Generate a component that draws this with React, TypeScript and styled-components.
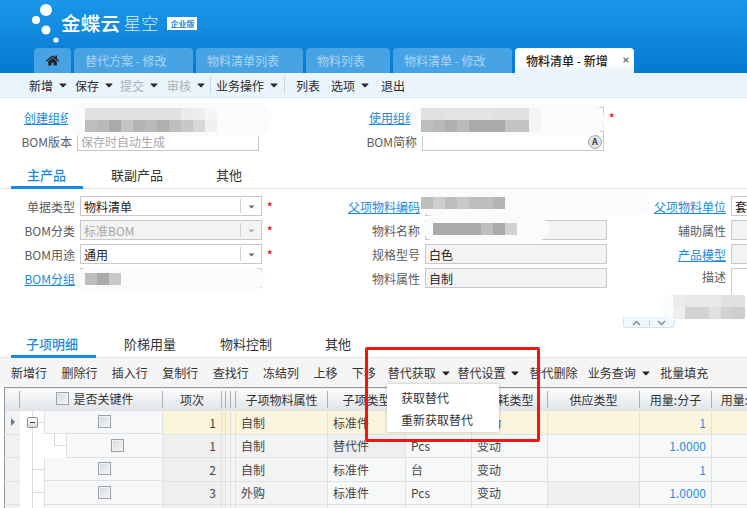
import React from "react";
import styled, { createGlobalStyle } from "styled-components";
import { FaCaretDown, FaHome, FaTimes } from "react-icons/fa";

const GlobalStyle = createGlobalStyle`
  html, body {
    margin: 0;
    padding: 0;
    background: #fff;
    overflow: hidden;
  }
  * {
    box-sizing: border-box;
  }
  body {
    font-family: "Noto Sans CJK SC", "Liberation Sans", sans-serif;
    font-size: 12px;
    color: #333;
  }
`;

const Page = styled.div`
  position: relative;
  width: 747px;
  height: 508px;
  overflow: hidden;
`;

const Header = styled.header`
  height: 73px;
  padding: 0 0 0 34px;
  display: flex;
  flex-direction: column;
  justify-content: flex-end;
  background: linear-gradient(#1b96ea, #0479d0);
`;

const Brand = styled.div`
  position: absolute;
  left: 30px;
  top: 3px;
  height: 42px;
  display: flex;
  align-items: center;
  color: #fff;
`;

const BrandName = styled.span`
  font-size: 19.5px;
  line-height: 24px;
  font-weight: 500;
  letter-spacing: 0.3px;
  margin-top: -2px;
`;

const BrandSub = styled.span`
  margin-left: 3px;
  font-size: 17.5px;
  line-height: 24px;
  font-weight: 300;
  margin-top: -2px;
  color: #d4ecfb;
`;

const Edition = styled.span`
  margin: -2px 0 0 9px;
  width: 30px;
  height: 13px;
  background: #fff;
  color: #1c8ddd;
  font-size: 8px;
  line-height: 13px;
  text-align: center;
  font-weight: 700;
  white-space: nowrap;
`;

const Tabs = styled.nav`
  display: flex;
  gap: 3px;
  height: 25px;
`;

const Tab = styled.div<{ $width: number; $active?: boolean }>`
  width: ${(p) => p.$width}px;
  display: flex;
  align-items: center;
  gap: 14px;
  padding: 0 0 1px 11px;
  border-radius: 4px 4px 0 0;
  background: ${(p) =>
    p.$active ? "linear-gradient(#fff 55%, #e9f3fa)" : "#48a3e4"};
  color: ${(p) => (p.$active ? "#222" : "#a8d5f5")};
  font-weight: ${(p) => (p.$active ? 500 : 400)};
  white-space: nowrap;
`;

const HomeTab = styled(Tab)`
  justify-content: center;
  padding-left: 0;
`;

const TopBar = styled.div`
  height: 25px;
  padding-left: 29px;
  display: flex;
  align-items: center;
  background: #e9f4fc;
  border-bottom: 1px solid #dce9f4;
`;

const TopItem = styled.span<{ $disabled?: boolean; $gap: number }>`
  display: flex;
  align-items: center;
  margin-right: ${(p) => p.$gap}px;
  color: ${(p) => (p.$disabled ? "#aab0b5" : "#2a2a2a")};
  white-space: nowrap;

  svg {
    margin-left: 4px;
    color: #2a2a2a;
  }
`;

const TopDivider = styled.i<{ $after: number }>`
  width: 1px;
  height: 18px;
  margin-right: ${(p) => p.$after}px;
  background: #cfd8df;
`;

const TopForm = styled.section`
  padding-top: 9px;
  display: grid;
  grid-template-columns: 290px 330px;
  row-gap: 4px;
`;

const TopField = styled.div<{ $label: number }>`
  display: grid;
  grid-template-columns: ${(p) => p.$label}px 182px 12px;
  column-gap: 5px;
  align-items: center;
  height: 20px;
`;

const Label = styled.label`
  text-align: right;
  color: #5c5c5c;
  white-space: nowrap;
`;

const LinkLabel = styled.a`
  justify-self: end;
  color: #1a8ae0;
  text-decoration: underline;
  white-space: nowrap;
`;

const Input = styled.div<{ $readonly?: boolean; $muted?: boolean }>`
  position: relative;
  height: 20px;
  padding: 0 3px;
  display: flex;
  align-items: center;
  border: 1px solid #c8c8c8;
  background: ${(p) => (p.$readonly ? "#f3f3f3" : "#fff")};
  color: ${(p) => (p.$muted ? "#a8a8a8" : "#222")};
  white-space: nowrap;
  overflow: hidden;
`;

const SelectArrow = styled.span<{ $muted?: boolean }>`
  position: absolute;
  right: 0;
  top: 2px;
  bottom: 2px;
  width: 21px;
  border-left: 1px solid #cfcfcf;
  display: flex;
  align-items: center;
  justify-content: center;
  color: ${(p) => (p.$muted ? "#aaa" : "#666")};
`;

const LangBadge = styled.span`
  position: absolute;
  right: 1px;
  top: 3px;
  width: 14px;
  height: 14px;
  border-radius: 50%;
  background: #dfe4e8;
  border: 1px solid #9aa3aa;
  color: #444;
  font-size: 9px;
  font-weight: 700;
  line-height: 12px;
  text-align: center;
`;

const Required = styled.span`
  color: #e8232a;
  font-weight: 700;
  font-size: 11px;
  line-height: 12px;
`;

const SectionTabs = styled.div<{ $top: number }>`
  margin-top: ${(p) => p.$top}px;
  height: 24px;
  padding-left: 11px;
  display: flex;
  border-bottom: 1px solid #e4e4e4;
`;

const SectionTab = styled.div<{ $width: number; $pad: number; $active?: boolean }>`
  width: ${(p) => p.$width}px;
  padding-left: ${(p) => p.$pad}px;
  height: 24px;
  font-size: 13px;
  line-height: 20px;
  white-space: nowrap;
  color: ${(p) => (p.$active ? "#1a8ae0" : "#333")};
  font-weight: ${(p) => (p.$active ? 500 : 400)};
  border-bottom: ${(p) => (p.$active ? "3px solid #1a8ae0" : "none")};
`;

const MainForm = styled.section`
  position: relative;
  padding-top: 7px;
  display: grid;
  grid-template-columns: 280px 327px 140px;
  grid-auto-rows: 20px;
  row-gap: 4px;
`;

const LeftField = styled.div`
  display: grid;
  grid-template-columns: 75px 182px 12px;
  column-gap: 5px;
  align-items: center;
`;

const MiddleField = styled.div`
  display: grid;
  grid-template-columns: 140px 182px;
  column-gap: 5px;
  align-items: center;
`;

const RightField = styled.div<{ $tall?: boolean }>`
  display: grid;
  grid-template-columns: 119px 40px;
  column-gap: 5px;
  align-items: ${(p) => (p.$tall ? "start" : "center")};
`;

const DescBox = styled.div`
  height: 42px;
  border: 1px solid #c8c8c8;
  background: #fff;
`;

const Stepper = styled.div`
  margin: 29px 0 0 623px;
  width: 52px;
  height: 11px;
  display: flex;
  align-items: center;
  border: 1px solid #cfe3f3;
  border-top-color: #e6f1f9;
  border-radius: 0 0 3px 3px;
  background: #f1f8fd;
`;

const StepperPart = styled.span`
  flex: 1;
  display: flex;
  justify-content: center;

  & + & {
    border-left: 1px solid #c5ccd2;
  }
`;

const RowBar = styled.div`
  height: 29px;
  padding-left: 11px;
  display: flex;
  align-items: center;
  background: #f5f5f5;
`;

const RowAction = styled.span<{ $gap?: number }>`
  display: flex;
  align-items: center;
  margin-right: ${(p) => p.$gap ?? 14.4}px;
  white-space: nowrap;

  svg {
    margin-left: 4px;
    color: #222;
  }
`;

const GridTable = styled.table`
  table-layout: fixed;
  width: 777px;
  margin-left: 4px;
  border-collapse: collapse;
  border-top: 1px solid #8f969c;
  border-left: 1px solid #8f969c;
`;

const HeadCell = styled.th`
  position: relative;
  height: 23px;
  padding: 0;
  background: linear-gradient(#fbfcfc, #dfe2e6);
  font-weight: 400;
  color: #333;
  text-align: center;
  white-space: nowrap;
  overflow: hidden;

  &::after {
    content: "";
    position: absolute;
    right: 0;
    top: 3px;
    bottom: 3px;
    width: 1px;
    background: #a9afb5;
  }
`;

const HeadInner = styled.span`
  display: inline-flex;
  align-items: center;
  gap: 4px;
  margin-left: 8px;
`;

const Cell = styled.td<{ $tone?: string; $align?: string; $link?: boolean }>`
  height: 23.5px;
  padding: 0 5px;
  background: ${(p) => p.$tone ?? "#f7f8f8"};
  border-right: 1px solid #dfe2e5;
  border-bottom: 1px solid #dfe2e5;
  text-align: ${(p) => p.$align ?? "left"};
  color: ${(p) => (p.$link ? "#2a8ce2" : "#444")};
  white-space: nowrap;
  overflow: hidden;
`;

const ThinCell = styled(Cell)`
  padding: 0;
`;

const RowMark = styled.td`
  padding: 0;
  background: #f1f2f3;
  border-bottom: 1px solid #dfe2e5;
`;

const RowPointer = styled.i`
  display: block;
  margin-left: 6px;
  width: 0;
  height: 0;
  border-left: 4px solid #6c7396;
  border-top: 4px solid transparent;
  border-bottom: 4px solid transparent;
`;

const KeyCell = styled.td`
  padding: 0;
  height: 23.5px;
  border-right: 1px solid #dfe2e5;
`;

const KeyInner = styled.div<{ $indent: number }>`
  position: relative;
  height: 100%;
  min-height: 23px;
  padding-left: ${(p) => p.$indent}px;
  background: #fff;
`;

const KeyBody = styled.div<{ $shift?: number }>`
  height: 100%;
  min-height: 23px;
  padding-left: ${(p) => p.$shift ?? 0}px;
  display: flex;
  align-items: center;
  justify-content: center;
  background: #f7f8f9;
  border-left: 1px solid #dfe2e5;
  border-bottom: 1px solid #dfe2e5;
`;

const TreeStem = styled.i`
  position: absolute;
  left: 12px;
  top: 0;
  bottom: -1px;
  width: 1px;
  background: #d7dbdf;
`;

const TreeBranch = styled.i`
  position: absolute;
  left: 12px;
  top: 11px;
  width: 12px;
  height: 1px;
  background: #d7dbdf;
`;

const TreeHook = styled.i`
  position: absolute;
  left: 34px;
  top: 0;
  width: 12px;
  height: 12px;
  border-left: 1px solid #d7dbdf;
  border-bottom: 1px solid #d7dbdf;
`;

const TreeToggle = styled.span`
  position: absolute;
  left: 7px;
  top: 6px;
  width: 11px;
  height: 11px;
  border: 1px solid #8b9298;
  border-radius: 2px;
  background: linear-gradient(#fff, #d6dade);
  z-index: 1;

  &::after {
    content: "";
    position: absolute;
    left: 2px;
    top: 4px;
    width: 5px;
    height: 1px;
    background: #444;
  }
`;

const Check = styled.span`
  display: inline-block;
  width: 13px;
  height: 13px;
  border: 1px solid #9aa0a5;
  background: linear-gradient(135deg, #d5d8db, #f7f7f7);
  box-shadow: inset 0 0 0 1px #f2f2f2;
`;

const DropMenu = styled.div`
  position: absolute;
  left: 387px;
  top: 384px;
  width: 112px;
  height: 48px;
  padding: 3px 0 0 14px;
  background: #fff;
  box-shadow: 0 0 3px rgba(0, 0, 0, 0.25);
  z-index: 3;
`;

const MenuItem = styled.div`
  height: 22px;
  line-height: 22px;
  white-space: nowrap;
`;

const Highlight = styled.div`
  position: absolute;
  left: 365px;
  top: 347px;
  width: 175px;
  height: 95px;
  border: 3px solid #f5140f;
  border-radius: 2px;
  z-index: 4;
`;

const Smear = styled.div<{
  $left: number;
  $top: number;
  $w: number;
  $h: number;
  $rows: number;
  $pad: number;
}>`
  position: absolute;
  left: ${(p) => p.$left}px;
  top: ${(p) => p.$top}px;
  width: ${(p) => p.$w}px;
  height: ${(p) => p.$h}px;
  display: grid;
  grid-auto-flow: column;
  grid-auto-columns: 12px;
  grid-template-rows: repeat(${(p) => p.$rows}, 12px);
  align-content: center;
  padding-left: ${(p) => p.$pad}px;
  border-radius: 14px;
  background: rgba(250, 251, 252, 0.97);
  z-index: 2;
  overflow: hidden;
`;

const Pixel = styled.i<{ $tone: number }>`
  background: rgb(${(p) => p.$tone}, ${(p) => p.$tone}, ${(p) => p.$tone});
`;

function Mosaic({
  left,
  top,
  w,
  h,
  rows = 1,
  pad = 10,
  tones,
}: {
  left: number;
  top: number;
  w: number;
  h: number;
  rows?: number;
  pad?: number;
  tones: number[];
}) {
  return (
    <Smear $left={left} $top={top} $w={w} $h={h} $rows={rows} $pad={pad}>
      {tones.map((t, i) => (
        <Pixel key={i} $tone={t} />
      ))}
    </Smear>
  );
}

function Caret() {
  return <FaCaretDown size={12} />;
}

function Logo() {
  return (
    <svg width="31" height="42" viewBox="0 0 31 42">
      <circle cx="16" cy="7" r="6" fill="#fff" />
      <circle cx="6" cy="17" r="4" fill="#fff" />
      <circle cx="16" cy="27" r="4.5" fill="#fff" />
      <circle cx="26" cy="37" r="2.6" fill="#fff" />
    </svg>
  );
}

function Select({ value, readonly }: { value: string; readonly?: boolean }) {
  return (
    <Input $readonly={readonly} $muted={readonly}>
      {value}
      <SelectArrow $muted={readonly}>
        <FaCaretDown size={9} />
      </SelectArrow>
    </Input>
  );
}

const rows = [
  { level: 0, seq: "1", attr: "自制", kind: "标准件", unit: "", loss: "变动", qty: "1", current: true },
  { level: 1, seq: "1", attr: "自制", kind: "替代件", unit: "Pcs", loss: "变动", qty: "1.0000" },
  { level: 0, seq: "2", attr: "自制", kind: "标准件", unit: "台", loss: "变动", qty: "1" },
  { level: 0, seq: "3", attr: "外购", kind: "标准件", unit: "Pcs", loss: "变动", qty: "1.0000" },
  { level: 0, seq: "", attr: "", kind: "", unit: "", loss: "", qty: "" },
];

export default function App() {
  return (
    <Page>
      <GlobalStyle />
      <Header>
        <Brand>
          <Logo />
          <BrandName>金蝶云</BrandName>
          <BrandSub>星空</BrandSub>
          <Edition>企业版</Edition>
        </Brand>
        <Tabs>
          <HomeTab $width={37}>
            <FaHome size={13} color="#222" />
          </HomeTab>
          <Tab $width={119}>替代方案 - 修改</Tab>
          <Tab $width={107}>物料清单列表</Tab>
          <Tab $width={84}>物料列表</Tab>
          <Tab $width={119}>物料清单 - 修改</Tab>
          <Tab $width={119} $active>
            物料清单 - 新增
            <FaTimes size={8} color="#777" />
          </Tab>
        </Tabs>
      </Header>

      <TopBar>
        <TopItem $gap={6}>
          新增
          <Caret />
        </TopItem>
        <TopItem $gap={5}>
          保存
          <Caret />
        </TopItem>
        <TopItem $disabled $gap={7}>
          提交
          <Caret />
        </TopItem>
        <TopItem $disabled $gap={3}>
          审核
          <Caret />
        </TopItem>
        <TopDivider $after={5} />
        <TopItem $gap={4}>
          业务操作
          <Caret />
        </TopItem>
        <TopDivider $after={11} />
        <TopItem $gap={11}>列表</TopItem>
        <TopItem $gap={10}>
          选项
          <Caret />
        </TopItem>
        <TopItem $gap={0}>退出</TopItem>
      </TopBar>

      <TopForm>
        <TopField $label={72}>
          <LinkLabel>创建组织</LinkLabel>
          <Input />
        </TopField>
        <TopField $label={127}>
          <LinkLabel>使用组织</LinkLabel>
          <Input />
          <Required>*</Required>
        </TopField>
        <TopField $label={72}>
          <Label>BOM版本</Label>
          <Input $muted>保存时自动生成</Input>
        </TopField>
        <TopField $label={127}>
          <Label>BOM简称</Label>
          <Input>
            <LangBadge>A</LangBadge>
          </Input>
        </TopField>
      </TopForm>

      <SectionTabs $top={14}>
        <SectionTab $width={72} $pad={16} $active>
          主产品
        </SectionTab>
        <SectionTab $width={133} $pad={28}>
          联副产品
        </SectionTab>
        <SectionTab $width={60} $pad={0}>
          其他
        </SectionTab>
      </SectionTabs>

      <MainForm>
        <LeftField>
          <Label>单据类型</Label>
          <Select value="物料清单" />
          <Required>*</Required>
        </LeftField>
        <MiddleField>
          <LinkLabel>父项物料编码</LinkLabel>
          <Input />
        </MiddleField>
        <RightField>
          <LinkLabel>父项物料单位</LinkLabel>
          <Input>套</Input>
        </RightField>

        <LeftField>
          <Label>BOM分类</Label>
          <Select value="标准BOM" readonly />
          <Required>*</Required>
        </LeftField>
        <MiddleField>
          <Label>物料名称</Label>
          <Input $readonly />
        </MiddleField>
        <RightField>
          <Label>辅助属性</Label>
          <Input $readonly />
        </RightField>

        <LeftField>
          <Label>BOM用途</Label>
          <Select value="通用" />
          <Required>*</Required>
        </LeftField>
        <MiddleField>
          <Label>规格型号</Label>
          <Input $readonly>白色</Input>
        </MiddleField>
        <RightField>
          <LinkLabel>产品模型</LinkLabel>
          <Input $readonly />
        </RightField>

        <LeftField>
          <LinkLabel>BOM分组</LinkLabel>
          <Input />
        </LeftField>
        <MiddleField>
          <Label>物料属性</Label>
          <Input $readonly>自制</Input>
        </MiddleField>
        <RightField $tall>
          <Label>描述</Label>
          <DescBox />
        </RightField>
      </MainForm>

      <Stepper>
        <StepperPart>
          <svg width="9" height="6" viewBox="0 0 9 6">
            <path d="M1 5l3.5-3.5L8 5" fill="none" stroke="#7d8790" strokeWidth="1.4" />
          </svg>
        </StepperPart>
        <StepperPart>
          <svg width="9" height="6" viewBox="0 0 9 6">
            <path d="M1 1l3.5 3.5L8 1" fill="none" stroke="#7d8790" strokeWidth="1.4" />
          </svg>
        </StepperPart>
      </Stepper>

      <SectionTabs $top={6}>
        <SectionTab $width={85} $pad={15} $active>
          子项明细
        </SectionTab>
        <SectionTab $width={124} $pad={28}>
          阶梯用量
        </SectionTab>
        <SectionTab $width={105} $pad={0}>
          物料控制
        </SectionTab>
        <SectionTab $width={60} $pad={0}>
          其他
        </SectionTab>
      </SectionTabs>

      <RowBar>
        <RowAction>新增行</RowAction>
        <RowAction>删除行</RowAction>
        <RowAction>插入行</RowAction>
        <RowAction>复制行</RowAction>
        <RowAction>查找行</RowAction>
        <RowAction>冻结列</RowAction>
        <RowAction>上移</RowAction>
        <RowAction $gap={12}>下移</RowAction>
        <RowAction $gap={5.5}>
          替代获取
          <Caret />
        </RowAction>
        <RowAction $gap={8}>
          替代设置
          <Caret />
        </RowAction>
        <RowAction $gap={10.4}>替代删除</RowAction>
        <RowAction $gap={8.5}>
          业务查询
          <Caret />
        </RowAction>
        <RowAction>批量填充</RowAction>
      </RowBar>

      <GridTable>
        <colgroup>
          <col width={15} />
          <col width={143} />
          <col width={59} />
          <col width={4} />
          <col width={5} />
          <col width={5} />
          <col width={92} />
          <col width={78} />
          <col width={66} />
          <col width={76} />
          <col width={92} />
          <col width={72} />
          <col width={70} />
        </colgroup>
        <thead>
          <tr>
            <HeadCell />
            <HeadCell>
              <HeadInner>
                <Check />
                是否关键件
              </HeadInner>
            </HeadCell>
            <HeadCell>项次</HeadCell>
            <HeadCell />
            <HeadCell />
            <HeadCell />
            <HeadCell>子项物料属性</HeadCell>
            <HeadCell>子项类型</HeadCell>
            <HeadCell>子项单位</HeadCell>
            <HeadCell>损耗类型</HeadCell>
            <HeadCell>供应类型</HeadCell>
            <HeadCell>用量:分子</HeadCell>
            <HeadCell>用量:分母</HeadCell>
          </tr>
        </thead>
        <tbody>
          {rows.map((r, i) => {
            const tone = r.current ? "#fbf4dd" : undefined;
            const frozen = r.current ? "#fdf0cc" : "#f0f0f0";
            return (
              <tr key={i}>
                <RowMark>{r.current && <RowPointer />}</RowMark>
                <KeyCell>
                  <KeyInner $indent={r.level ? 46 : 24}>
                    <TreeStem />
                    {r.current && <TreeToggle />}
                    {r.level === 0 && <TreeBranch />}
                    {r.level === 1 && <TreeHook />}
                    <KeyBody $shift={r.level ? 6 : 2}>
                      {r.seq && <Check />}
                    </KeyBody>
                  </KeyInner>
                </KeyCell>
                <Cell $tone={tone ?? "#efefef"} $align="right">
                  {r.seq}
                </Cell>
                <ThinCell $tone={frozen} />
                <ThinCell $tone={tone ?? "#f4f4f4"} />
                <ThinCell $tone={tone ?? "#f4f4f4"} />
                <Cell $tone={tone ?? "#f3f3f3"}>{r.attr}</Cell>
                <Cell $tone={tone ?? (i === 1 ? "#efefef" : "#f7f8f8")}>{r.kind}</Cell>
                <Cell $tone={tone}>{r.unit}</Cell>
                <Cell $tone={tone}>{r.loss}</Cell>
                <Cell $tone={i === 3 ? "#f0f0f0" : tone}></Cell>
                <Cell $tone={tone} $align="right" $link>
                  {r.qty}
                </Cell>
                <Cell $tone={tone} />
              </tr>
            );
          })}
        </tbody>
      </GridTable>

      <DropMenu>
        <MenuItem>获取替代</MenuItem>
        <MenuItem>重新获取替代</MenuItem>
      </DropMenu>
      <Highlight />

      <Mosaic
        left={68}
        top={103}
        w={203}
        h={33}
        rows={2}
        pad={17}
        tones={[225, 190, 225, 185, 225, 170, 225, 195, 225, 180, 225, 185, 225, 175, 225, 190, 235, 200, 238, 215, 245, 240]}
      />
      <Mosaic
        left={410}
        top={104}
        w={194}
        h={32}
        rows={2}
        pad={11}
        tones={[225, 190, 225, 185, 228, 175, 228, 185, 228, 170, 228, 170, 225, 170, 225, 195, 225, 195, 245, 245]}
      />
      <Mosaic left={420} top={190} w={230} h={26} pad={1} tones={[190, 205, 190, 200, 190, 190, 180]} />
      <Mosaic left={423} top={216} w={126} h={25} pad={10} tones={[170, 170, 170, 170, 190, 170, 210]} />
      <Mosaic left={75} top={268} w={190} h={22} tones={[190, 170, 200]} />
      <Mosaic
        left={661}
        top={294}
        w={90}
        h={26}
        rows={2}
        pad={12}
        tones={[235, 238, 232, 210, 232, 210, 232, 225, 225, 210, 225, 205]}
      />
    </Page>
  );
}
